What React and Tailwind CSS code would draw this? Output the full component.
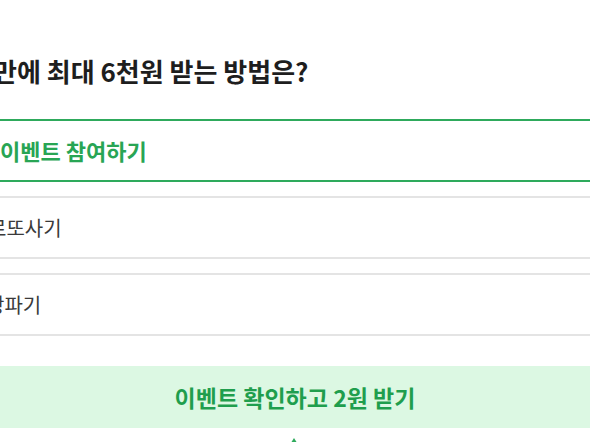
export default function App() {
  return (
    <div className="w-[590px] h-[442px] overflow-hidden bg-white font-['Noto_Sans_CJK_KR',sans-serif]">
      <div className="pt-[56px]">
        <h2 className="ml-[-7px] whitespace-nowrap text-[26px] font-bold leading-[30px] text-[#1e1e1e]">
          만에 최대 6천원 받는 방법은?
        </h2>
        <div className="mt-[33px] flex flex-col gap-[14px]">
          <div className="flex h-[63px] items-center border-y-2 border-[#2eaa5c] text-[22px] font-bold text-[#28a554]">
            <span className="whitespace-nowrap">이벤트 참여하기</span>
          </div>
          <div className="flex h-[63px] items-center border-y-2 border-[#e4e4e4] text-[20px] text-[#3a3a3a]">
            <span className="ml-[-12px] whitespace-nowrap">로또사기</span>
          </div>
          <div className="flex h-[63px] items-center border-y-2 border-[#e4e4e4] text-[20px] text-[#3a3a3a]">
            <span className="ml-[-14px] whitespace-nowrap">땅파기</span>
          </div>
        </div>
        <div className="mt-[30px] flex h-[62px] items-center justify-center bg-[#dcf8e3] text-[23px] font-bold text-[#1f9e4d]">
          이벤트 확인하고 2원 받기
        </div>
        <div className="flex justify-center pt-[10px]">
          <svg width="10" height="8" viewBox="0 0 10 8" className="ml-[-3px]">
            <path d="M5 0 L10 8 L0 8 Z" fill="#2eaa5c" />
          </svg>
        </div>
      </div>
    </div>
  );
}
